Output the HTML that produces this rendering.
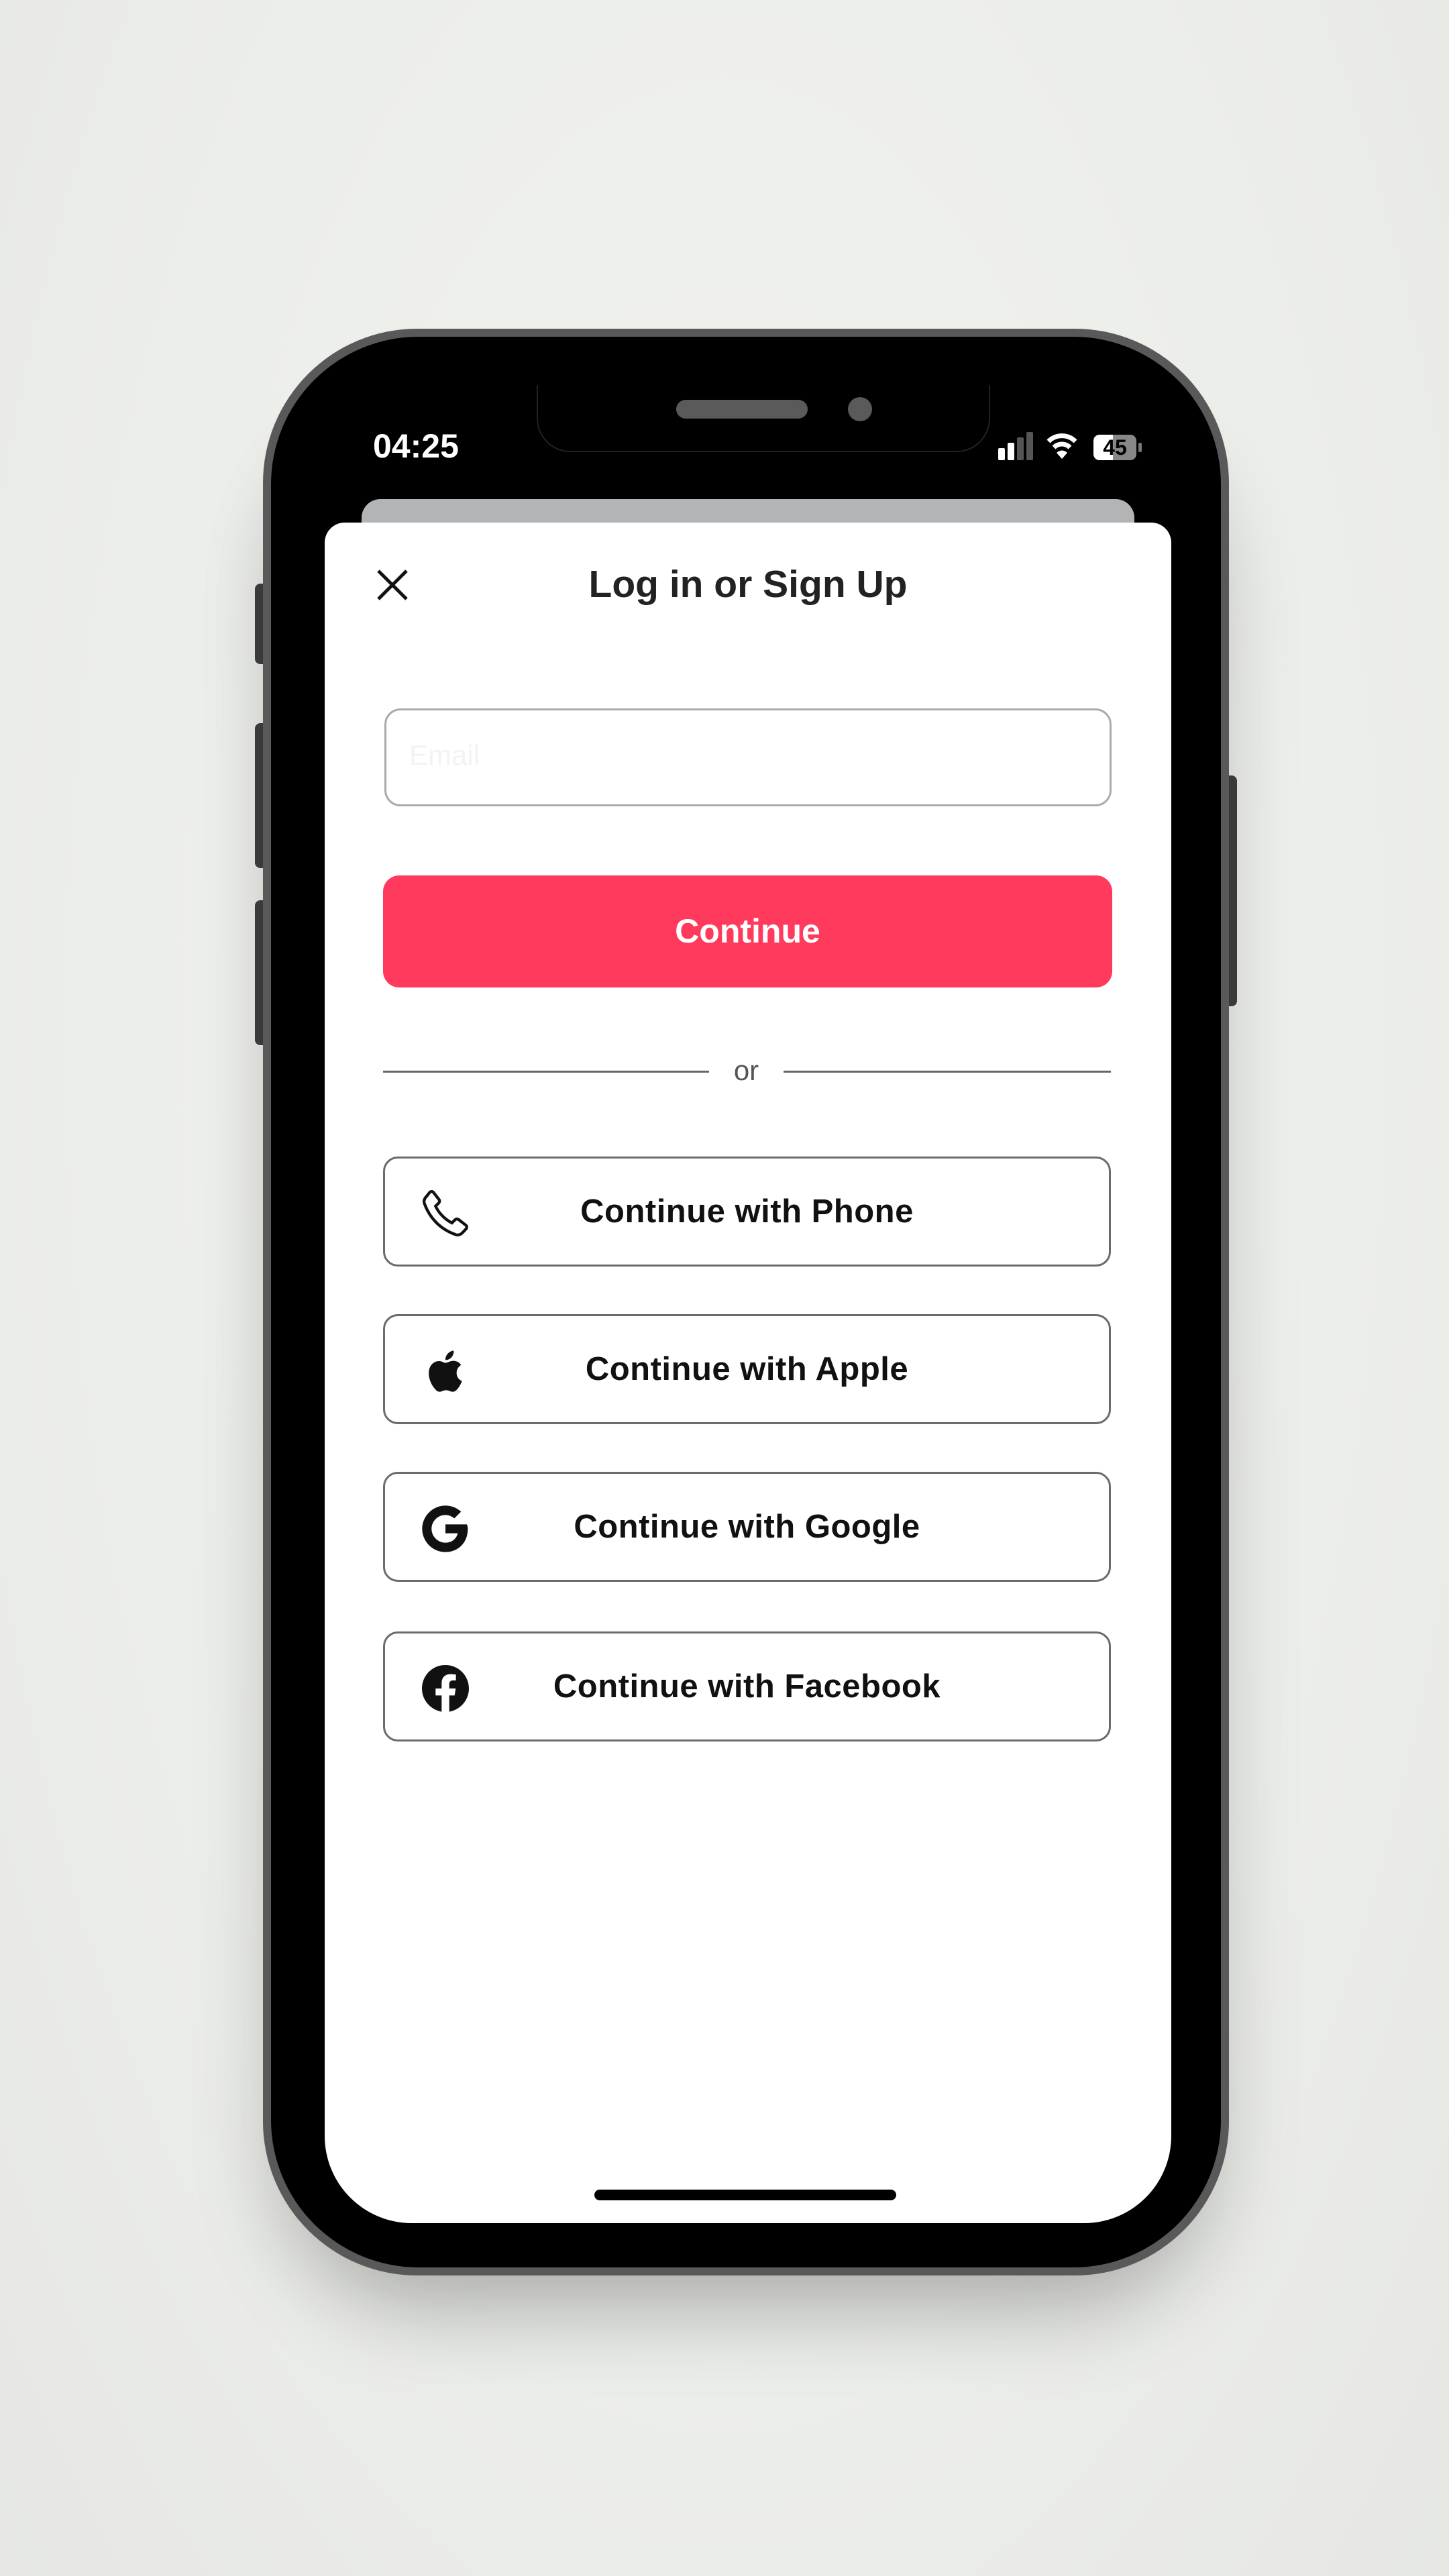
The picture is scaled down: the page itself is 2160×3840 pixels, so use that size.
<!DOCTYPE html>
<html><head><meta charset="utf-8"><style>
*{margin:0;padding:0;box-sizing:border-box}
body{width:2160px;height:3840px;overflow:hidden;background:radial-gradient(ellipse at 50% 40%,#f2f3ef 0%,#eceeea 60%,#e6e7e3 100%);font-family:"Liberation Sans",sans-serif;position:relative}
.a{position:absolute}
.btn{position:absolute;left:571px;width:1085px;height:164px;border:3px solid #6b6b6b;border-radius:22px;background:#fff}
.btn span{position:absolute;left:0;right:0;top:0;bottom:0;text-align:center;line-height:158px;font-size:49px;font-weight:bold;color:#111;letter-spacing:0.5px}
.btn svg{position:absolute;left:50px;top:42px}
</style></head><body>
<!-- shadow -->
<div class="a" style="left:420px;top:560px;width:1384px;height:2800px;border-radius:220px;background:#000;box-shadow:0 80px 160px rgba(0,0,0,0.28)"></div>
<!-- side buttons -->
<div class="a" style="left:380px;top:870px;width:24px;height:120px;background:#3a3a3a;border-radius:8px"></div>
<div class="a" style="left:380px;top:1078px;width:24px;height:216px;background:#3a3a3a;border-radius:8px"></div>
<div class="a" style="left:380px;top:1342px;width:24px;height:216px;background:#3a3a3a;border-radius:8px"></div>
<div class="a" style="left:1820px;top:1156px;width:24px;height:344px;background:#3a3a3a;border-radius:8px"></div>
<!-- phone -->
<div class="a" style="left:392px;top:490px;width:1440px;height:2902px;border-radius:230px;background:#595959"></div>
<div class="a" style="left:404px;top:502px;width:1416px;height:2878px;border-radius:220px;background:#000"></div>
<!-- screen -->
<div class="a" style="left:484px;top:574px;width:1262px;height:2740px;border-radius:130px;background:#000;overflow:hidden">
 <div class="a" style="left:55px;top:170px;width:1152px;height:80px;background:#b3b4b6;border-radius:28px"></div>
 <div class="a" style="left:0;top:205px;width:1262px;height:2535px;background:#fff;border-radius:30px 30px 110px 110px"></div>
</div>
<!-- notch -->
<div class="a" style="left:800px;top:574px;width:676px;height:100px;background:#000;border-radius:0 0 50px 50px;border:2px solid #222;border-top:none"></div>
<div class="a" style="left:1008px;top:596px;width:196px;height:28px;background:#5a5a5a;border-radius:14px"></div>
<div class="a" style="left:1264px;top:592px;width:36px;height:36px;background:#5a5a5a;border-radius:50%"></div>
<!-- status -->
<div class="a" style="left:556px;top:636px;font-size:50px;font-weight:bold;color:#fff">04:25</div>
<div class="a" style="left:1488px;top:668px;width:10px;height:18px;background:#fff;border-radius:2px"></div>
<div class="a" style="left:1502px;top:660px;width:10px;height:26px;background:#fff;border-radius:2px"></div>
<div class="a" style="left:1516px;top:652px;width:10px;height:34px;background:#555;border-radius:2px"></div>
<div class="a" style="left:1530px;top:644px;width:10px;height:42px;background:#555;border-radius:2px"></div>
<svg class="a" style="left:1560px;top:644px" width="46" height="42" viewBox="0 0 46 42"><path d="M3 14 A28 28 0 0 1 43 14" stroke="#fff" stroke-width="7" fill="none"/><path d="M11 23 A17 17 0 0 1 35 23" stroke="#fff" stroke-width="7" fill="none"/><path d="M23 40 L15 31 A11 11 0 0 1 31 31 Z" fill="#fff"/></svg>
<div class="a" style="left:1630px;top:648px;width:64px;height:38px;border-radius:9px;background:linear-gradient(90deg,#fff 45%,#888 45%);font-size:32px;font-weight:bold;color:#000;text-align:center;line-height:38px">45</div>
<div class="a" style="left:1697px;top:660px;width:5px;height:14px;background:#777;border-radius:2px"></div>
<!-- header -->
<svg class="a" style="left:560px;top:847px" width="50" height="50" viewBox="0 0 50 50"><path d="M4 4L46 46M46 4L4 46" stroke="#111" stroke-width="5"/></svg>
<div class="a" style="left:700px;top:838px;width:830px;text-align:center;font-size:57px;font-weight:bold;color:#222">Log in or Sign Up</div>
<!-- email -->
<div class="a" style="left:573px;top:1056px;width:1084px;height:146px;border:3px solid #aaa;border-radius:24px;background:#fff"></div>
<div class="a" style="left:610px;top:1102px;font-size:42px;color:#f3f3f3">Email</div>
<!-- continue -->
<div class="a" style="left:571px;top:1305px;width:1087px;height:167px;border-radius:24px;background:#ff3a5c;color:#fff;font-size:50px;font-weight:bold;text-align:center;line-height:167px">Continue</div>
<!-- or -->
<div class="a" style="left:571px;top:1596px;width:486px;height:3px;background:#666"></div>
<div class="a" style="left:1168px;top:1596px;width:488px;height:3px;background:#666"></div>
<div class="a" style="left:1057px;top:1572px;width:111px;text-align:center;font-size:42px;color:#555">or</div>
<!-- buttons -->
<div class="btn" style="top:1724px"><svg width="80" height="80" viewBox="0 0 24 24"><path d="M6.6 2.5l2.5 3.2c.4.5.3 1.2-.1 1.6L7.6 8.7c1.3 2.9 4.1 5.9 7.3 7.5l1.4-1.4c.4-.4 1.1-.5 1.6-.1l3.2 2.5c.5.4.6 1.2.1 1.7l-1.7 1.8c-.8.8-2 1.1-3 .7C9.8 19 5 14.2 2.6 7.5c-.4-1 0-2.2.8-3L5 2.5c.5-.5 1.2-.4 1.6 0z" fill="none" stroke="#111" stroke-width="1.3"/></svg><span>Continue with Phone</span></div>
<div class="btn" style="top:1959px"><svg width="80" height="80" viewBox="0 0 24 24"><path d="M17 12.8c0-2.4 2-3.5 2-3.6-1.1-1.6-2.8-1.8-3.4-1.8-1.400-.1-2.800.9-3.500.9-.7 0-1.800-.9-3-.8-1.600 0-3 .9-3.800 2.300-1.600 2.800-.4 6.900 1.200 9.100.8 1.100 1.700 2.300 2.800 2.300 1.100 0 1.600-.7 3-.7s1.800.7 3 .7c1.200 0 2-1.100 2.800-2.200.9-1.300 1.200-2.500 1.300-2.600-.1 0-2.400-.9-2.400-3.600zM14.800 5.700c.6-.8 1-1.800.9-2.900-.9 0-2 .6-2.700 1.400-.6.7-1.100 1.700-1 2.800 1 .1 2.100-.5 2.800-1.300z" fill="#111"/></svg><span>Continue with Apple</span></div>
<div class="btn" style="top:2194px"><svg width="80" height="80" viewBox="0 0 24 24"><path d="M21.6 10H12v4h5.5c-.6 2.6-2.8 4.2-5.5 4.2-3.4 0-6.2-2.8-6.2-6.2S8.6 5.8 12 5.8c1.5 0 2.9.6 4 1.5l3-3C17.1 2.6 14.7 1.6 12 1.6 6.3 1.6 1.6 6.3 1.6 12S6.3 22.4 12 22.4c5.4 0 10-3.9 10-10.4 0-.7-.1-1.3-.4-2z" fill="#111"/></svg><span>Continue with Google</span></div>
<div class="btn" style="top:2432px"><svg width="80" height="80" viewBox="0 0 24 24"><path d="M12 1.5C6.2 1.5 1.5 6.2 1.5 12c0 5.2 3.8 9.5 8.8 10.4v-7.3H7.6V12h2.7V9.7c0-2.7 1.6-4.1 4-4.1 1.2 0 2.4.2 2.4.2v2.6h-1.3c-1.3 0-1.7.8-1.7 1.7V12h2.9l-.5 3.1h-2.4v7.3c5-.9 8.8-5.2 8.8-10.4C22.5 6.2 17.8 1.5 12 1.5z" fill="#111"/></svg><span>Continue with Facebook</span></div>
<!-- home indicator -->
<div class="a" style="left:886px;top:3264px;width:450px;height:16px;background:#000;border-radius:8px"></div>
</body></html>
